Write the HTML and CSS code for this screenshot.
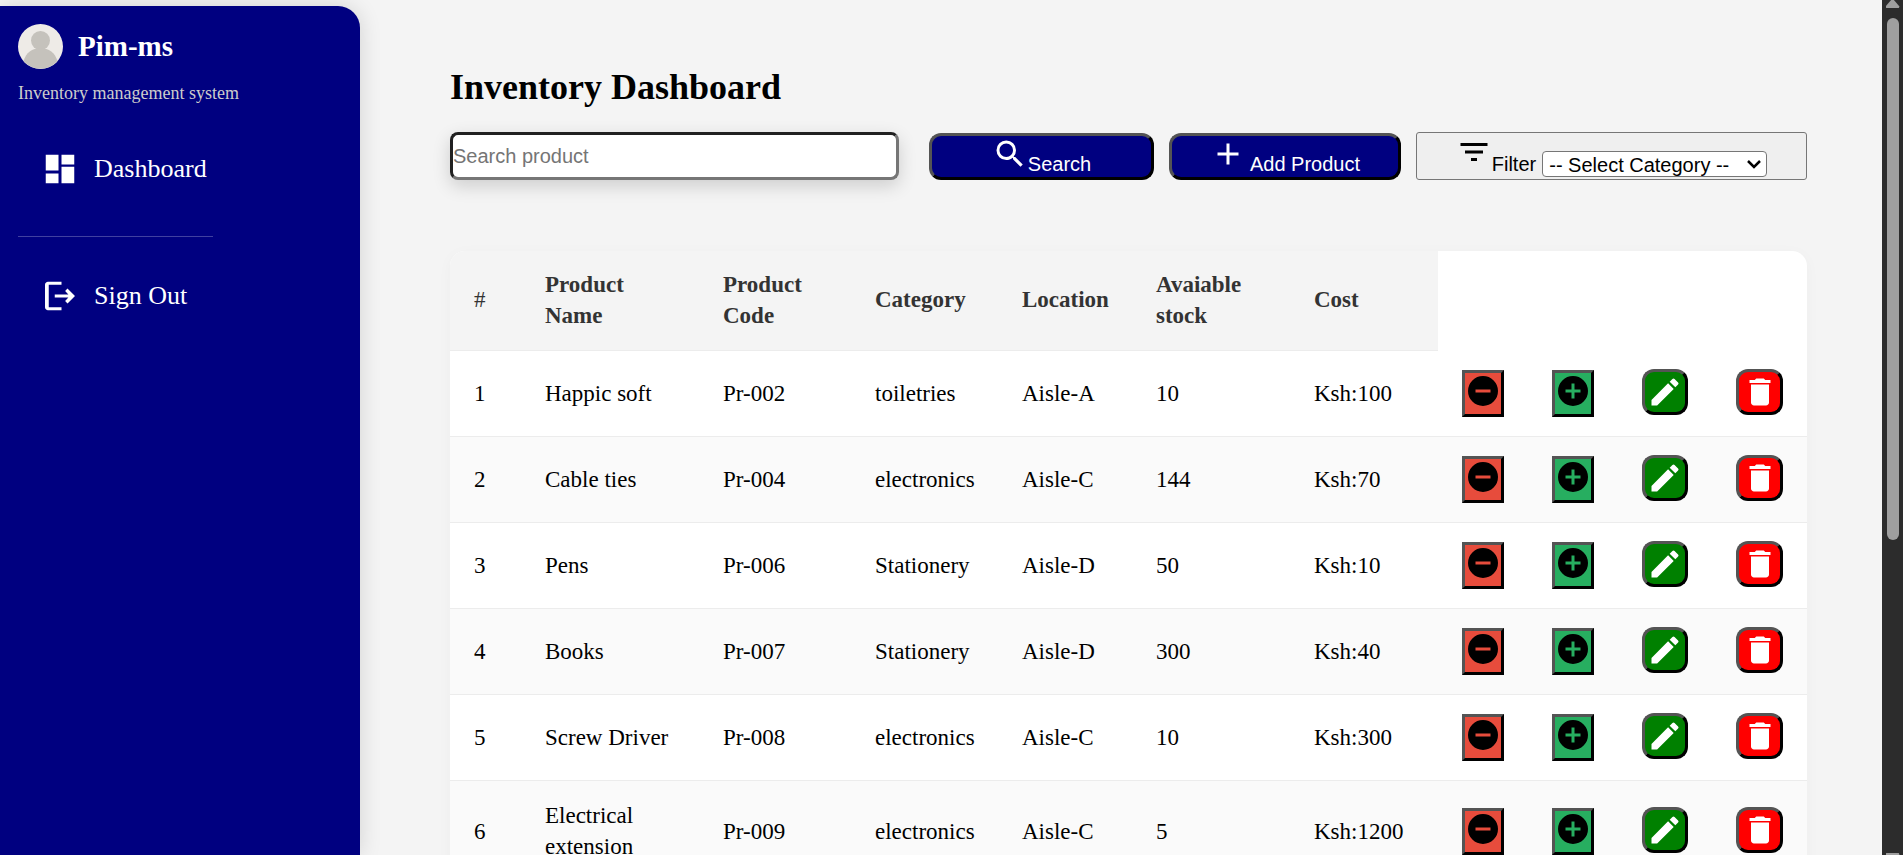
FILE: index.html
```html
<!DOCTYPE html>
<html lang="en">
<head>
<meta charset="utf-8">
<title>Inventory Dashboard</title>
<link rel="stylesheet" href="styles.css">
</head>
<body>
<svg class="sprite" aria-hidden="true">
  <symbol id="i-search" viewBox="0 0 24 24"><path d="M15.5 14h-.79l-.28-.27A6.47 6.47 0 0 0 16 9.5 6.5 6.5 0 1 0 9.5 16c1.61 0 3.09-.59 4.23-1.57l.27.28v.79l5 4.99L20.49 19l-4.99-5zm-6 0C7.01 14 5 11.99 5 9.5S7.01 5 9.5 5 14 7.01 14 9.5 11.99 14 9.5 14z"/></symbol>
  <symbol id="i-add" viewBox="0 0 24 24"><path d="M19 13h-6v6h-2v-6H5v-2h6V5h2v6h6v2z"/></symbol>
  <symbol id="i-filter" viewBox="0 0 24 24"><path d="M10 18h4v-2h-4v2zM3 6v2h18V6H3zm3 7h12v-2H6v2z"/></symbol>
  <symbol id="i-minus" viewBox="0 0 24 24"><path d="M12 2a10 10 0 1 0 0 20 10 10 0 0 0 0-20zm5 11H7v-2h10v2z"/></symbol>
  <symbol id="i-plus" viewBox="0 0 24 24"><path d="M12 2a10 10 0 1 0 0 20 10 10 0 0 0 0-20zm5 11h-4v4h-2v-4H7v-2h4V7h2v4h4v2z"/></symbol>
  <symbol id="i-edit" viewBox="0 0 24 24"><path d="M3 17.250V21h3.750L17.810 9.940l-3.750-3.750L3 17.250zM20.710 7.040a1 1 0 0 0 0-1.410l-2.340-2.340a1 1 0 0 0-1.410 0l-1.830 1.830 3.750 3.750 1.830-1.830z"/></symbol>
  <symbol id="i-delete" viewBox="0 0 24 24"><path d="M6 19c0 1.100.9 2 2 2h8c1.100 0 2-.9 2-2V7H6v12zM19 4h-3.500l-1-1h-5l-1 1H5v2h14V4z"/></symbol>
  <symbol id="i-dash" viewBox="0 0 24 24"><path d="M2.500 13h8.500V2.500H2.500V13zm0 8.500h8.500V15H2.500v6.500zm10.500 0h8.500V10.500H13v11zm0-19V9h8.500V2.500H13z"/></symbol>
  <symbol id="i-out" viewBox="0 0 24 24"><path d="M17 7l-1.600 1.600L17.600 11H8.500v2h9.100l-2.200 2.400L17 17l5-5-5-5zM4.500 4.500H13v-2H4c-1.100 0-2 .9-2 2v15c0 1.100.9 2 2 2h9v-2H4.500v-15z"/></symbol>
</svg>
<div class="app">
  <aside class="sidebar">
    <div class="brand">
      <svg class="avatar" viewBox="0 0 45 45" aria-hidden="true"><circle class="avatar-bg" cx="22.500" cy="22.500" r="22.500"/><circle class="avatar-fg" cx="22.500" cy="16.500" r="9.500"/><path class="avatar-fg" d="M5.500 37C8 29 14 24 22.500 24S37 29 39.500 37A22.500 22.500 0 0 1 5.500 37z"/></svg>
      <span class="brand-name">Pim-ms</span>
    </div>
    <p class="tagline">Inventory management system</p>
    <nav class="nav">
      <a class="nav-link" href="#dashboard"><svg class="nav-icon"><use href="#i-dash"/></svg>Dashboard</a>
      <hr class="nav-rule">
      <a class="nav-link" href="#signout"><svg class="nav-icon"><use href="#i-out"/></svg>Sign Out</a>
    </nav>
  </aside>
  <main class="content">
    <h1 class="title">Inventory Dashboard</h1>
    <div class="toolbar">
      <input class="search-box" type="text" placeholder="Search product" aria-label="Search product">
      <button class="tool" type="button"><svg class="tool-icon"><use href="#i-search"/></svg><span>Search</span></button>
      <button class="tool add-btn" type="button"><svg class="tool-icon"><use href="#i-add"/></svg><span>Add Product</span></button>
      <div class="filter">
        <svg class="tool-icon"><use href="#i-filter"/></svg>
        <label class="filter-label" for="category">Filter</label>
        <select class="category" id="category"><option>-- Select Category --</option><option>toiletries</option><option>electronics</option><option>Stationery</option></select>
      </div>
    </div>
    <table class="products">
      <colgroup><col class="c-num"><col class="c-name"><col class="c-code"><col class="c-cat"><col class="c-loc"><col class="c-stock"><col class="c-cost"><col class="c-act"><col class="c-act"><col class="c-edit"><col class="c-del"></colgroup>
      <thead><tr><th class="num">#</th><th>Product Name</th><th>Product Code</th><th>Category</th><th>Location</th><th>Avaiable stock</th><th>Cost</th></tr></thead>
      <tbody id="rows"></tbody>
    </table>
  </main>
  <div class="scrollbar" aria-hidden="true"><span class="arrow"></span><span class="thumb"></span><span class="arrow down"></span></div>
</div>
<script src="app.js"></script>
</body>
</html>
```
FILE: styles.css
```css
* { box-sizing: border-box; }
body { margin: 0; background: #f4f4f4; font-family: "Liberation Serif", "Times New Roman", serif; color: #000; }
.sprite { display: none; }
.app { display: flex; height: 100vh; overflow: hidden; }

.sidebar { flex: none; width: 360px; margin-top: 6px; padding: 18px; background: #000080; color: #fff; border-top-right-radius: 22px; box-shadow: 0 0 22px rgba(0, 0, 0, 0.14); }
.brand { display: flex; align-items: center; gap: 15px; }
.avatar { width: 45px; height: 45px; }
.avatar-bg { fill: #eeebe7; }
.avatar-fg { fill: #c5c2bc; }
.brand-name { font-size: 29px; font-weight: bold; }
.tagline { margin: 14px 0 0; font-size: 18px; line-height: 21px; color: #ccc; }
.nav { margin-top: 47px; }
.nav-link { display: flex; align-items: center; gap: 16px; height: 36px; padding-left: 24px; color: #fff; font-size: 26px; line-height: 36px; text-decoration: none; }
.nav-icon { width: 36px; height: 36px; fill: currentColor; }
.nav-rule { width: 195px; height: 1px; margin: 49px 0 41px; border: 0; background: rgba(255, 255, 255, 0.25); }

.content { flex: 1; min-width: 0; padding: 66px 75px 0 90px; overflow: hidden; }
.title { margin: 0; font-size: 36px; line-height: 42px; }
.toolbar { display: grid; grid-template-columns: minmax(0, 464fr) minmax(0, 225fr) minmax(0, 232fr) minmax(0, 391fr); align-items: end; gap: 15px; margin: 24px 0 71px; font-family: "Liberation Sans", Arial, sans-serif; font-size: 20px; }
.search-box { width: calc(100% - 15px); height: 48px; padding: 0; background: #fff; border: 3px inset #767676; border-radius: 8px; box-shadow: 0 6px 18px rgba(0, 0, 0, 0.16); font: inherit; }
.search-box::placeholder { color: #757575; }
.tool { display: flex; justify-content: center; align-items: flex-end; height: 47px; padding: 0 0 1px; background: #000080; color: #fff; border: 3px outset #000; border-radius: 12px; font: inherit; line-height: 24px; }
.add-btn { gap: 4px; }
.tool-icon { flex: none; align-self: flex-start; width: 36px; height: 36px; fill: currentColor; }
.filter { display: flex; justify-content: center; align-items: flex-end; height: 48px; padding: 1px 0 2px; background: #efefef; border: 1px solid #767676; border-radius: 3px; line-height: 26px; }
.filter-label { margin-right: 6px; }
.category { appearance: none; width: 225px; height: 26px; padding: 0 6px; background: #fff url("data:image/svg+xml,%3Csvg xmlns='http://www.w3.org/2000/svg' width='14' height='9' fill='none' stroke='%23000' stroke-width='2.500'%3E%3Cpath d='M1 1l6 6 6-6'/%3E%3C/svg%3E") no-repeat right 5px center; color: #000; border: 1px solid #767676; border-radius: 4px; font: inherit; }

.products { width: 100%; table-layout: fixed; border-collapse: separate; border-spacing: 0; overflow: hidden; background: #fff; border-radius: 15px; box-shadow: 0 3px 15px rgba(0, 0, 0, 0.03); font-size: 23px; line-height: 31px; }
.c-num { width: 71px; } .c-name { width: 178px; } .c-code { width: 152px; } .c-cat { width: 147px; }
.c-loc { width: 134px; } .c-stock { width: 158px; } .c-cost { width: 148px; }
.c-act { width: 90px; } .c-edit { width: 94px; } .c-del { width: 95px; }
.products th, .products td { padding: 0 24px; text-align: left; border-bottom: 1px solid #ececec; }
.products th { height: 100px; padding-bottom: 2px; background: #f4f4f4; color: #333; }
.products .num { font-weight: normal; }
.products td { height: 86px; padding-bottom: 1px; }
.products .tall td { height: 102px; }
.products tbody tr:nth-child(even) { background: #fafafa; }
.act { display: block; border: 3px outset #000; padding: 0; }
.act svg { display: block; width: 36px; height: 36px; margin: 0 auto; }
.dec, .inc { width: 42px; height: 47px; padding-bottom: 5px; }
.dec { background: #e74c3c; }
.inc { background: #27ae60; }
.edit, .del { width: 46px; height: 46px; margin-bottom: 3px; border-radius: 12px; fill: #fff; }
.edit { background: #008000; }
.del { width: 47px; background: #f00; }

.scrollbar { flex: none; display: flex; flex-direction: column; align-items: center; width: 21px; overflow: hidden; background: #2c2c2c; }
.arrow { flex: none; width: 14px; height: 8px; background: #9f9f9f; clip-path: polygon(40% 0, 60% 0, 100% 80%, 95% 100%, 5% 100%, 0 80%); }
.thumb { width: 12px; height: 61%; margin-top: 10px; background: #9f9f9f; border-radius: 6px; }
.down { margin: auto 0 -6px; clip-path: polygon(5% 0, 95% 0, 100% 20%, 60% 100%, 40% 100%, 0 20%); }
```
FILE: app.js
```js
const products = [
  ["Happic soft", "Pr-002", "toiletries", "Aisle-A", 10, 100],
  ["Cable ties", "Pr-004", "electronics", "Aisle-C", 144, 70],
  ["Pens", "Pr-006", "Stationery", "Aisle-D", 50, 10],
  ["Books", "Pr-007", "Stationery", "Aisle-D", 300, 40],
  ["Screw Driver", "Pr-008", "electronics", "Aisle-C", 10, 300],
  ["Electrical extension", "Pr-009", "electronics", "Aisle-C", 5, 1200]
];
const actions = [["dec", "minus", "Decrease stock"], ["inc", "plus", "Increase stock"], ["edit", "edit", "Edit"], ["del", "delete", "Delete"]];
document.getElementById("rows").innerHTML = products.map((p, i) => {
  const cells = [i + 1, ...p.slice(0, 5), "Ksh:" + p[5]].map(v => `<td>${v}</td>`).join("");
  const buttons = actions.map(([c, icon, label]) => `<td><button type="button" class="act ${c}" aria-label="${label}"><svg><use href="#i-${icon}"/></svg></button></td>`).join("");
  return `<tr${p[0].length > 15 ? ' class="tall"' : ""}>${cells}${buttons}</tr>`;
}).join("");
```
